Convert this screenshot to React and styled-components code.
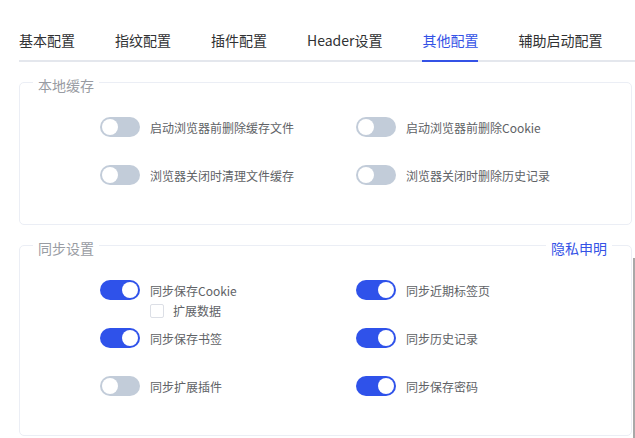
import { createGlobalStyle, styled } from 'styled-components'

// style///////////////////////////
const GlobalStyle = createGlobalStyle`
  html, body {
    margin: 0;
    padding: 0;
    background: #fff;
  }
  body {
    font-family: "Noto Sans CJK SC", "Noto Sans", sans-serif;
    -webkit-font-smoothing: antialiased;
  }
`

const Page = styled.div`
  position: relative;
  width: 635px;
  height: 438px;
  overflow: hidden;
  padding: 20px 0 0 19px;
  box-sizing: border-box;
`

const TabNav = styled.div`
  display: flex;
  height: 42px;
  box-sizing: border-box;
  border-bottom: 2px solid #e4e7ed;
`

const TabItem = styled.div`
  position: relative;
  height: 40px;
  line-height: 40px;
  padding: 0 20px;
  font-size: 14px;
  color: ${(p) => (p.$active ? '#3452e6' : '#303133')};
  white-space: nowrap;

  &:first-child {
    padding-left: 0;
  }

  &::after {
    content: '';
    display: ${(p) => (p.$active ? 'block' : 'none')};
    position: absolute;
    left: 20px;
    right: 20px;
    bottom: -2px;
    height: 2px;
    background: #3452e6;
  }
`

const Content = styled.div`
  padding-right: 3px;
`

const Card = styled.div`
  position: relative;
  margin-top: 20px;
  border: 1px solid #ebeef5;
  border-radius: 5px;
  padding: 34px 0 11px 80px;
`

const Legend = styled.span`
  position: absolute;
  top: -7px;
  ${(p) => (p.$right ? 'right: 19px;' : 'left: 13px;')}
  padding: 0 5px;
  background: #fff;
  font-size: 14px;
  line-height: 18px;
  color: ${(p) => (p.$link ? '#3452e6' : '#999ca3')};
  cursor: ${(p) => (p.$link ? 'pointer' : 'default')};
`

const OptionGrid = styled.div`
  display: grid;
  grid-template-columns: 256px 256px;
  grid-auto-rows: 48px;
`

const Option = styled.div`
  display: flex;
  flex-direction: column;
  gap: 4px;
`

const SwitchRow = styled.label`
  display: flex;
  align-items: center;
  gap: 10px;
  height: 20px;
  font-size: 12px;
  color: #606266;
`

const Switch = styled.span`
  position: relative;
  flex: none;
  width: 40px;
  height: 20px;
  border-radius: 10px;
  background: ${(p) => (p.$on ? '#2f52ea' : '#c2ccd9')};

  &::after {
    content: '';
    position: absolute;
    top: 2px;
    left: ${(p) => (p.$on ? '22px' : '2px')};
    width: 16px;
    height: 16px;
    border-radius: 50%;
    background: #fff;
  }
`

const CheckRow = styled.label`
  display: flex;
  align-items: center;
  gap: 9px;
  height: 13px;
  margin-left: 50px;
  font-size: 12px;
  color: #606266;
`

const CheckBox = styled.span`
  flex: none;
  width: 12px;
  height: 12px;
  border: 1px solid #dcdfe6;
  border-radius: 2px;
  background: #fff;
`

const ScrollThumb = styled.div`
  position: absolute;
  right: 0;
  top: 258px;
  bottom: 0;
  width: 2px;
  background: #a8a8a8;
`

// data//////////////////////////
const tabs = ['基本配置', '指纹配置', '插件配置', 'Header设置', '其他配置', '辅助启动配置']

const localCache = [
  { label: '启动浏览器前删除缓存文件', on: false },
  { label: '启动浏览器前删除Cookie', on: false },
  { label: '浏览器关闭时清理文件缓存', on: false },
  { label: '浏览器关闭时删除历史记录', on: false },
]

const syncSettings = [
  { label: '同步保存Cookie', on: true, extra: '扩展数据' },
  { label: '同步近期标签页', on: true },
  { label: '同步保存书签', on: true },
  { label: '同步历史记录', on: true },
  { label: '同步扩展插件', on: false },
  { label: '同步保存密码', on: true },
]

function OptionItem({ item }) {
  return (
    <Option>
      <SwitchRow>
        <Switch $on={item.on} />
        {item.label}
      </SwitchRow>
      {item.extra && (
        <CheckRow>
          <CheckBox />
          {item.extra}
        </CheckRow>
      )}
    </Option>
  )
}

export default function App() {
  return (
    <>
      <GlobalStyle />
      <Page>
        <TabNav>
          {tabs.map((t) => (
            <TabItem key={t} $active={t === '其他配置'}>
              {t}
            </TabItem>
          ))}
        </TabNav>

        <Content>
          <Card>
            <Legend>本地缓存</Legend>
            <OptionGrid>
              {localCache.map((item) => (
                <OptionItem key={item.label} item={item} />
              ))}
            </OptionGrid>
          </Card>

          <Card>
            <Legend>同步设置</Legend>
            <Legend $right $link>
              隐私申明
            </Legend>
            <OptionGrid>
              {syncSettings.map((item) => (
                <OptionItem key={item.label} item={item} />
              ))}
            </OptionGrid>
          </Card>
        </Content>
        <ScrollThumb />
      </Page>
    </>
  )
}
